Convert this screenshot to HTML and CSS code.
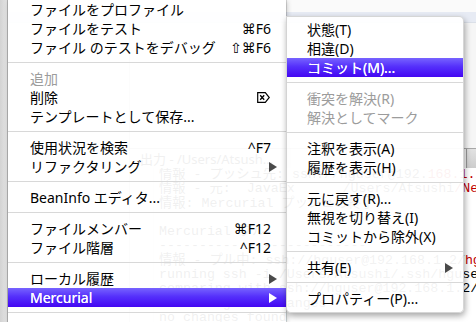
FILE: index.html
```html
<!DOCTYPE html>
<html lang="ja">
<head>
<meta charset="utf-8">
<title>Mercurial menu</title>
<link rel="stylesheet" href="styles.css">
</head>
<body>
<div class="desk">
  <div class="gutter"></div>
  <div class="win">
    <div class="topband"></div>
    <div class="content">
      <div class="side"></div>
      <div class="rightcol">
        <div class="editor"></div>
        <div class="output">
          <div class="out-head"><span class="tab">出力 - /Users/Atsush...</span></div>
          <div class="out-body">
            <div class="out-tools"></div>
<pre class="out-text">情報 - プッシュ先: ssh://hguser@192.<span class="red">168.1.2/hg</span>
情報 - 元:  JavaEx      /Users/Atsushi<span class="red">/NetBeansProjects/JavaEx</span>
情報: Mercurial プッシュの終了

Mercurial プル
--------------------------
情報 - プル中: ssh://hguser@192.168.1.2/<span class="red">hg</span>
running ssh -i /Users/Atsushi/.ssh/hguser
comparing with ssh://hguser@192.168.1.2/hg
searching for changes
no changes found</pre>
          </div>
        </div>
      </div>
    </div>
  </div>
</div>

<div class="menu main-menu">
  <div class="item"><span>ファイルをプロファイル</span></div>
  <div class="item"><span>ファイルをテスト</span><span class="key">⌘F6</span></div>
  <div class="item"><span>ファイル のテストをデバッグ</span><span class="key">⇧⌘F6</span></div>
  <div class="sep"></div>
  <div class="item off"><span>追加</span></div>
  <div class="item"><span>削除</span><svg class="del" width="13" height="11" viewBox="0 0 13 11"><path d="M0.7 0.7H8.3L12.3 5.5L8.3 10.3H0.7Z" fill="none" stroke="#000" stroke-width="1.2"/><path d="M3.2 3.2L7.2 7.8M7.2 3.2L3.2 7.8" stroke="#000" stroke-width="1.3"/></svg></div>
  <div class="item"><span>テンプレートとして保存...</span></div>
  <div class="sep"></div>
  <div class="item"><span>使用状況を検索</span><span class="key">^F7</span></div>
  <div class="item"><span>リファクタリング</span><span class="arrow"></span></div>
  <div class="sep"></div>
  <div class="item"><span>BeanInfo エディタ...</span></div>
  <div class="sep"></div>
  <div class="item"><span>ファイルメンバー</span><span class="key">⌘F12</span></div>
  <div class="item"><span>ファイル階層</span><span class="key">^F12</span></div>
  <div class="sep"></div>
  <div class="item"><span>ローカル履歴</span><span class="arrow"></span></div>
  <div class="item hi"><span>Mercurial</span><span class="arrow"></span></div>
  <div class="sep"></div>
</div>

<div class="menu sub-menu">
  <div class="item"><span>状態(T)</span></div>
  <div class="item"><span>相違(D)</span></div>
  <div class="item hi"><span>コミット(M)...</span></div>
  <div class="sep"></div>
  <div class="item off"><span>衝突を解決(R)</span></div>
  <div class="item off"><span>解決としてマーク</span></div>
  <div class="sep"></div>
  <div class="item"><span>注釈を表示(A)</span></div>
  <div class="item"><span>履歴を表示(H)</span></div>
  <div class="sep"></div>
  <div class="item"><span>元に戻す(R)...</span></div>
  <div class="item"><span>無視を切り替え(I)</span></div>
  <div class="item"><span>コミットから除外(X)</span></div>
  <div class="sep"></div>
  <div class="item"><span>共有(E)</span><span class="arrow"></span></div>
  <div class="sep"></div>
  <div class="item"><span>プロパティー(P)...</span></div>
</div>
</body>
</html>
```

FILE: styles.css
```css
* {
  box-sizing: border-box;
  margin: 0;
  padding: 0;
}

html,
body {
  width: 476px;
  height: 322px;
  overflow: hidden;
}

body {
  position: relative;
  background: #fff;
  font-family: "Noto Sans", "Noto Sans CJK JP", sans-serif;
  color: #000;
}

/* ---------- background window ---------- */
.desk {
  display: flex;
  width: 476px;
  height: 322px;
  overflow: hidden;
}

.gutter {
  width: 8px;
  flex: none;
  background: linear-gradient(to right, #d3d3d3, #e2e2e2 80%, #c2c2c2);
}

.win {
  flex: 1;
  min-width: 0;
  display: flex;
  flex-direction: column;
  background: #fff;
  overflow: hidden;
}

.topband {
  height: 23px;
  flex: none;
  background: linear-gradient(#fafafa 0, #fafafa 12px, #e7ebf4 12px, #e7ebf4 100%);
  border-bottom: 1px solid #dbe0e8;
}

.content {
  flex: 1;
  display: flex;
  min-height: 0;
}

.side {
  width: 122px;
  flex: none;
  background: #f7f7f7;
  border-right: 1px solid #cfcfcf;
}

.rightcol {
  flex: 1;
  min-width: 0;
  display: flex;
  flex-direction: column;
  overflow: hidden;
}

.editor {
  height: 125px;
  flex: none;
  background: #f6f6f6;
}

.output {
  flex: 1;
  display: flex;
  flex-direction: column;
  min-height: 0;
}

.out-head {
  height: 20px;
  flex: none;
  display: flex;
  align-items: center;
  background: linear-gradient(#e2e2e2, #cdcdcd);
  border-top: 1px solid #a8a8a8;
}

.tab {
  height: 100%;
  width: 337px;
  flex: none;
  display: flex;
  align-items: center;
  padding-left: 10px;
  font-size: 13px;
  background: #f2f2f2;
  border-right: 1px solid #9a9a9a;
}

.out-body {
  flex: 1;
  display: flex;
  background: #fff;
  min-height: 0;
  overflow: hidden;
}

.out-tools {
  width: 24px;
  flex: none;
  border-right: 1px solid #e2e2e2;
}

.out-text {
  padding-left: 5px;
  font-family: "Liberation Mono", "Noto Sans CJK JP", monospace;
  font-size: 13.3px;
  line-height: 14.3px;
  white-space: pre;
  color: #000;
}

.red {
  color: #c00000;
}

/* ---------- menus ---------- */
.menu {
  position: absolute;
  font-size: 14px;
  background: rgba(255, 255, 255, 0.94);
}

.main-menu {
  left: 8px;
  top: 0;
  width: 278px;
  height: 322px;
  box-shadow: 0 0 0 1px rgba(0, 0, 0, 0.13), 1px 1px 5px rgba(0, 0, 0, 0.22);
}

.sub-menu {
  left: 286px;
  top: 16px;
  width: 178px;
  padding: 3px 0 4px;
  border: 1px solid rgba(0, 0, 0, 0.16);
  border-radius: 0 5px 5px 5px;
  background: rgba(255, 255, 255, 0.95);
  box-shadow: 1px 3px 6px rgba(0, 0, 0, 0.35);
}

.item {
  height: 19px;
  display: flex;
  align-items: center;
  justify-content: space-between;
  white-space: nowrap;
  line-height: 19px;
}

.main-menu .item {
  padding: 0 9px 0 22px;
}

.sub-menu .item {
  padding: 0 10px 0 20px;
}

.item.off {
  color: #9c9c9c;
}

.item.hi {
  color: #fff;
  background: linear-gradient(#7763ff, #5530fb 45%, #4306f2);
  text-shadow: 0 0 0.4px #fff;
}

.key {
  margin-right: 6px;
  font-family: "Noto Sans", "DejaVu Sans", sans-serif;
}

.del {
  margin-right: 7px;
  display: block;
}

.arrow {
  width: 0;
  height: 0;
  border-left: 8px solid #4a4a4a;
  border-top: 5px solid transparent;
  border-bottom: 5px solid transparent;
}

.hi .arrow {
  border-left-color: #fff;
}

.sep {
  height: 12px;
  padding-top: 5px;
}

.sep::before {
  content: "";
  display: block;
  height: 1px;
  background: #d8d8d8;
}
```
